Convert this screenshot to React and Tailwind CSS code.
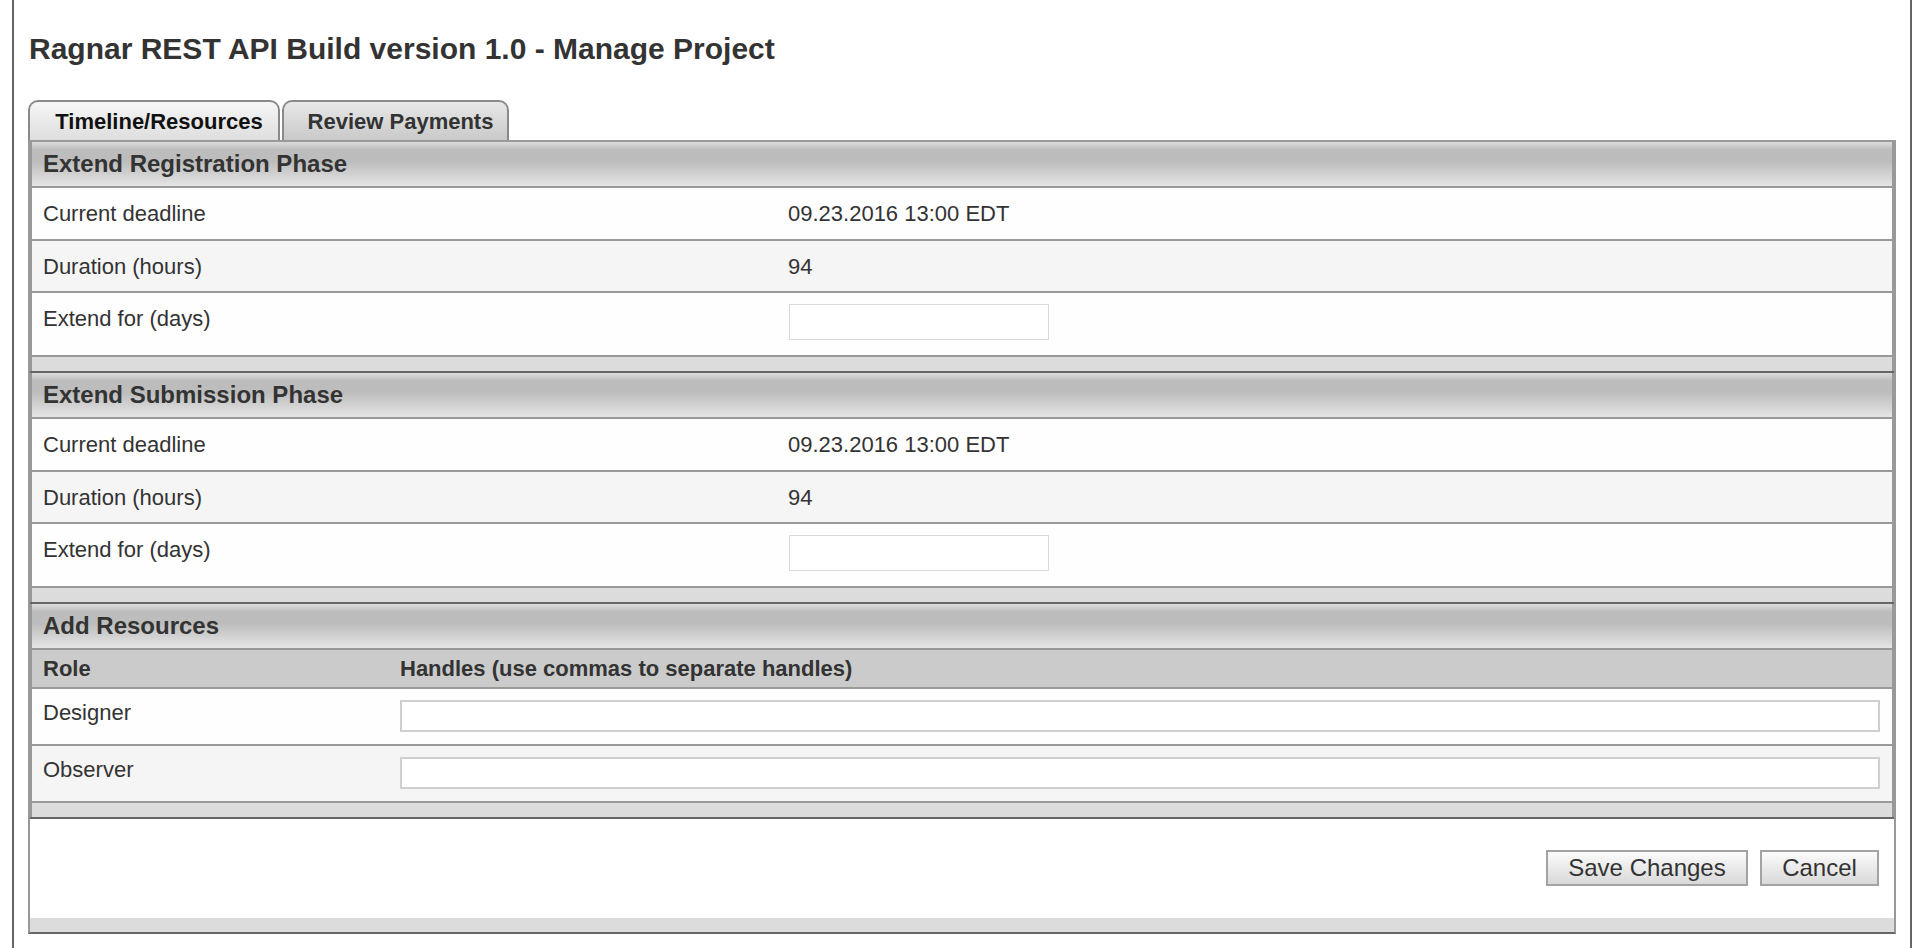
const headerBg =
  'bg-[linear-gradient(to_bottom,#dcdcdc_0%,#bcbcbc_18%,#bdbdbd_45%,#e5e5e5_100%)]';

function Section({ title, children }) {
  return (
    <>
      <div className="border-x-2 border-[#999]">
        <div
          className={`h-[46px] flex items-center pl-[11px] text-[24px] font-bold border-b-2 border-[#999] ${headerBg}`}
        >
          {title}
        </div>
        {children}
        <div className="h-[14px] bg-[#dcdcdc]" />
      </div>
      <div className="h-[2px] bg-[#666]" />
    </>
  );
}

function PhaseRows({ deadline, duration }) {
  return (
    <>
      <div className="h-[53px] flex items-center border-b-2 border-[#999] bg-[#fefefe]">
        <div className="w-[756px] pl-[11px]">Current deadline</div>
        <div>{deadline}</div>
      </div>
      <div className="h-[52px] flex items-center border-b-2 border-[#999] bg-[#f5f5f5]">
        <div className="w-[756px] pl-[11px]">Duration (hours)</div>
        <div>{duration}</div>
      </div>
      <div className="h-[64px] flex items-start pt-[11px] border-b-2 border-[#999] bg-[#fefefe]">
        <div className="w-[757px] pl-[11px] mt-[2px] leading-[26px]">Extend for (days)</div>
        <input type="text" className="w-[260px] h-[36px] border border-[#d9d9d9] bg-white outline-none" />
      </div>
    </>
  );
}

function ResourceRow({ role, shaded }) {
  return (
    <div
      className={`h-[57px] flex items-start pt-[10px] border-b-2 border-[#999] ${shaded ? 'bg-[#f5f5f5]' : 'bg-[#fefefe]'}`}
    >
      <div className="w-[368px] pl-[11px] mt-[1px] leading-[26px]">{role}</div>
      <div className="flex-1 pr-[12px]">
        <input type="text" className="w-full h-[32px] border-2 border-[#cfcfcf] bg-white outline-none" />
      </div>
    </div>
  );
}

export default function App() {
  return (
    <div className="min-h-screen bg-white font-['Liberation_Sans',Arial,sans-serif] text-[22px] text-[#333]">
      <div className="ml-[12px] mr-[14px] min-h-screen border-x-2 border-[#666] px-[14px]">
        <h1 className="h-[100px] pt-[34px] pl-px text-[30px] font-bold leading-[30px]">
          Ragnar REST API Build version 1.0 - Manage Project
        </h1>

        <div className="flex h-[40px] gap-[2px]">
          <div className="w-[252px] flex items-center justify-center pl-[10px] rounded-t-[10px] border-2 border-b-0 border-[#8a8a8a] bg-[linear-gradient(to_bottom,#f6f6f6,#dedede)] text-[22px] font-bold text-[#111]">
            Timeline/Resources
          </div>
          <div className="w-[227px] flex items-center justify-center pl-[10px] rounded-t-[10px] border-2 border-b-0 border-[#8a8a8a] bg-[linear-gradient(to_bottom,#e8e8e8,#c9c9c9)] text-[22px] font-bold text-[#333]">
            Review Payments
          </div>
        </div>

        <div className="w-[1868px] border-x-2 border-t-2 border-b-2 border-[#999] border-b-[#666]">
          <Section title="Extend Registration Phase">
            <PhaseRows deadline="09.23.2016 13:00 EDT" duration="94" />
          </Section>
          <Section title="Extend Submission Phase">
            <PhaseRows deadline="09.23.2016 13:00 EDT" duration="94" />
          </Section>
          <Section title="Add Resources">
            <div className="h-[39px] flex items-center border-b-2 border-[#999] bg-[#cbcbcb] font-bold">
              <div className="w-[368px] pl-[11px]">Role</div>
              <div>Handles (use commas to separate handles)</div>
            </div>
            <ResourceRow role="Designer" />
            <ResourceRow role="Observer" shaded />
          </Section>

          <div className="flex justify-end gap-[12px] pt-[31px] pb-[32px] pr-[15px] bg-white">
            <button className="w-[202px] h-[36px] border-2 border-[#a3a3a3] bg-[linear-gradient(to_bottom,#fbfbfb,#d9d9d9)] text-[24px] leading-none text-[#333]">
              Save Changes
            </button>
            <button className="w-[119px] h-[36px] border-2 border-[#a3a3a3] bg-[linear-gradient(to_bottom,#fbfbfb,#d9d9d9)] text-[24px] leading-none text-[#333]">
              Cancel
            </button>
          </div>
          <div className="h-[14px] bg-[#dcdcdc]" />
        </div>
      </div>
    </div>
  );
}
